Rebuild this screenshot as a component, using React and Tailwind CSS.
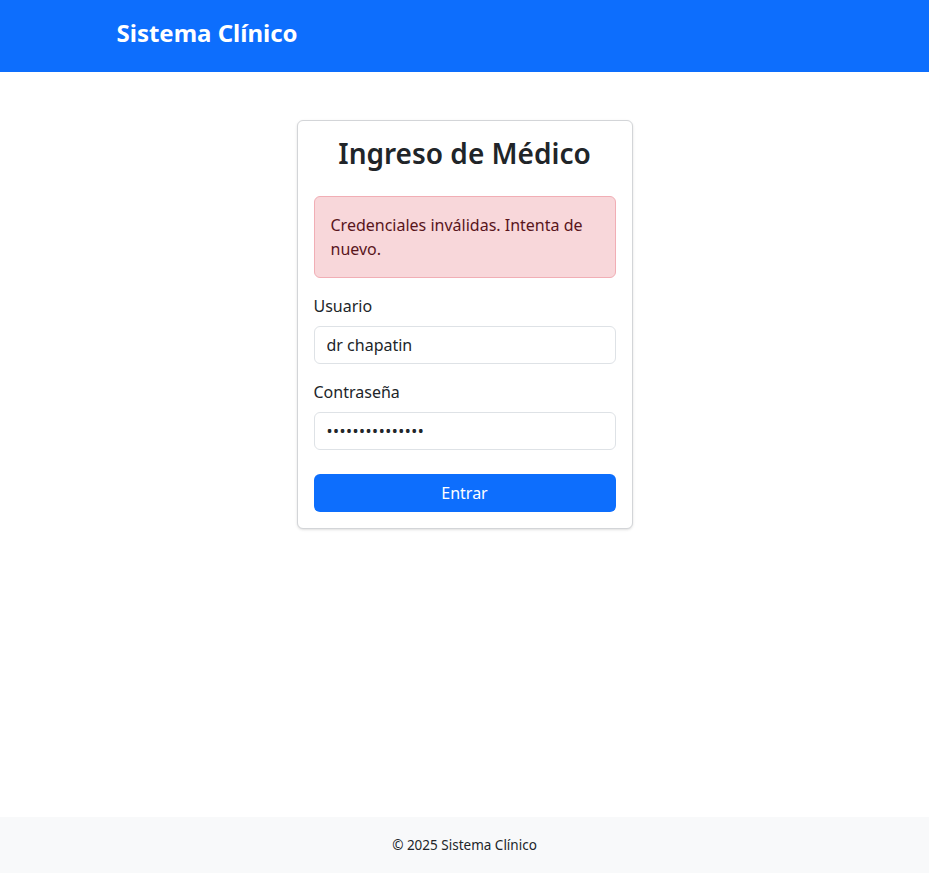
export default function App() {
  return (
    <div className="min-h-screen flex flex-col bg-white text-[#212529] font-['Noto_Sans','Open_Sans',sans-serif]">
      {/* Navbar */}
      <nav className="h-[72px] bg-[#0d6efd] flex items-center pb-1.5">
        <div className="w-[720px] mx-auto px-3">
          <span className="text-white text-2xl font-bold">Sistema Clínico</span>
        </div>
      </nav>

      {/* Login */}
      <main className="flex-1">
        <div className="w-[336px] mx-auto mt-12 bg-white border border-[#d3d5d8] rounded-md shadow-sm p-4">
          <h3 className="text-[28px] leading-[1.2] font-semibold text-center mb-[25px]">Ingreso de Médico</h3>

          <div className="bg-[#f8d7da] border border-[#f1aeb5] text-[#58151c] rounded-md p-4 mb-4 leading-6">
            Credenciales inválidas. Intenta de nuevo.
          </div>

          <div className="mb-4">
            <label className="block mb-2 leading-6">Usuario</label>
            <input
              type="text"
              defaultValue="dr chapatin"
              className="w-full h-[38px] px-3 border border-[#dee2e6] rounded-md leading-6 outline-none"
            />
          </div>

          <div className="mb-6">
            <label className="block mb-2 leading-6">Contraseña</label>
            <input
              type="password"
              defaultValue="chapatin1234567"
              className="w-full h-[38px] px-3 border border-[#dee2e6] rounded-md leading-6 tracking-[0.5px] outline-none"
            />
          </div>

          <button className="w-full h-[38px] bg-[#0d6efd] text-white rounded-md leading-6">Entrar</button>
        </div>
      </main>

      {/* Footer */}
      <footer className="bg-[#f8f9fa] py-4 text-center text-[13.5px] leading-6">© 2025 Sistema Clínico</footer>
    </div>
  );
}
